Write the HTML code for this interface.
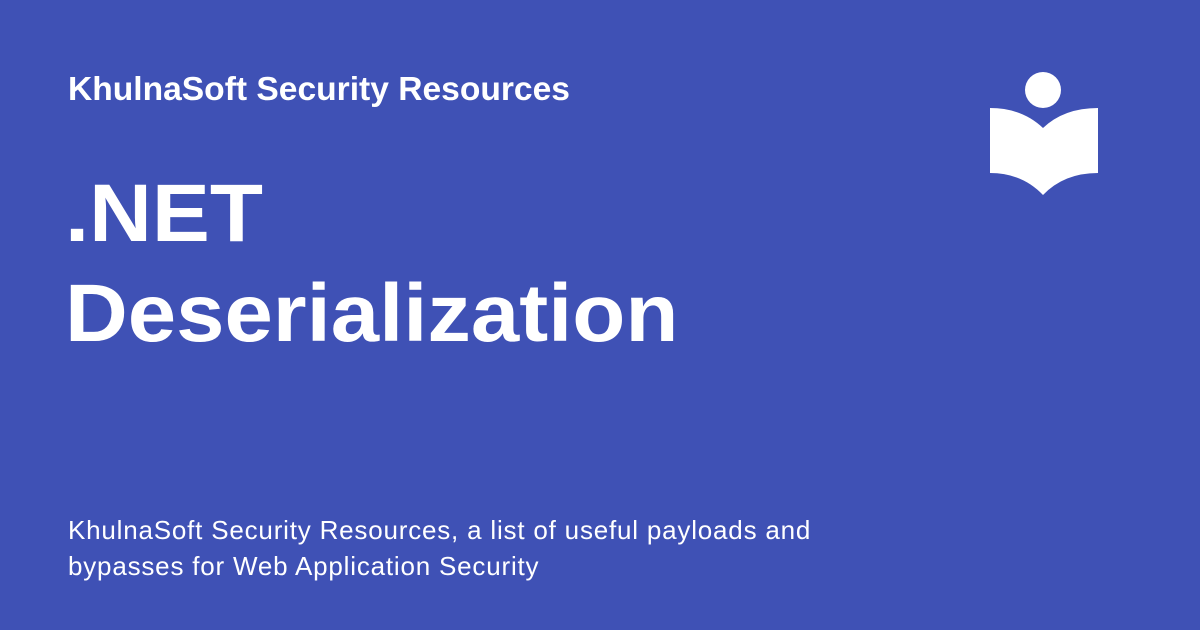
<!DOCTYPE html>
<html><head><style>
body{margin:0;width:1200px;height:630px;background:#3f51b5;overflow:hidden;font-family:"Liberation Sans",sans-serif;color:#fff;position:relative}
.t{position:absolute;left:68px;top:70px;font-weight:bold;font-size:33.6px;line-height:40px}
.h{position:absolute;left:65px;top:164px;font-weight:bold;font-size:82px;line-height:100px;transform:scaleX(1.06);transform-origin:0 0}
.d{position:absolute;left:68px;top:512px;font-size:26px;line-height:36px;letter-spacing:0.8px}
</style></head><body>
<div class="t">KhulnaSoft Security Resources</div>
<div class="h">.NET<br>Deserialization</div>
<div class="d">KhulnaSoft Security Resources, a list of useful payloads and<br>bypasses for Web Application Security</div>
<svg style="position:absolute;left:0;top:0" width="1200" height="630">
<circle cx="1043" cy="90" r="18" fill="#fff"/>
<path d="M990 108 Q1022 108 1043 128 Q1064 108 1098 108 L1098 173 Q1064 173 1043 195 Q1022 173 990 173 Z" fill="#fff"/>
</svg>
</body></html>
